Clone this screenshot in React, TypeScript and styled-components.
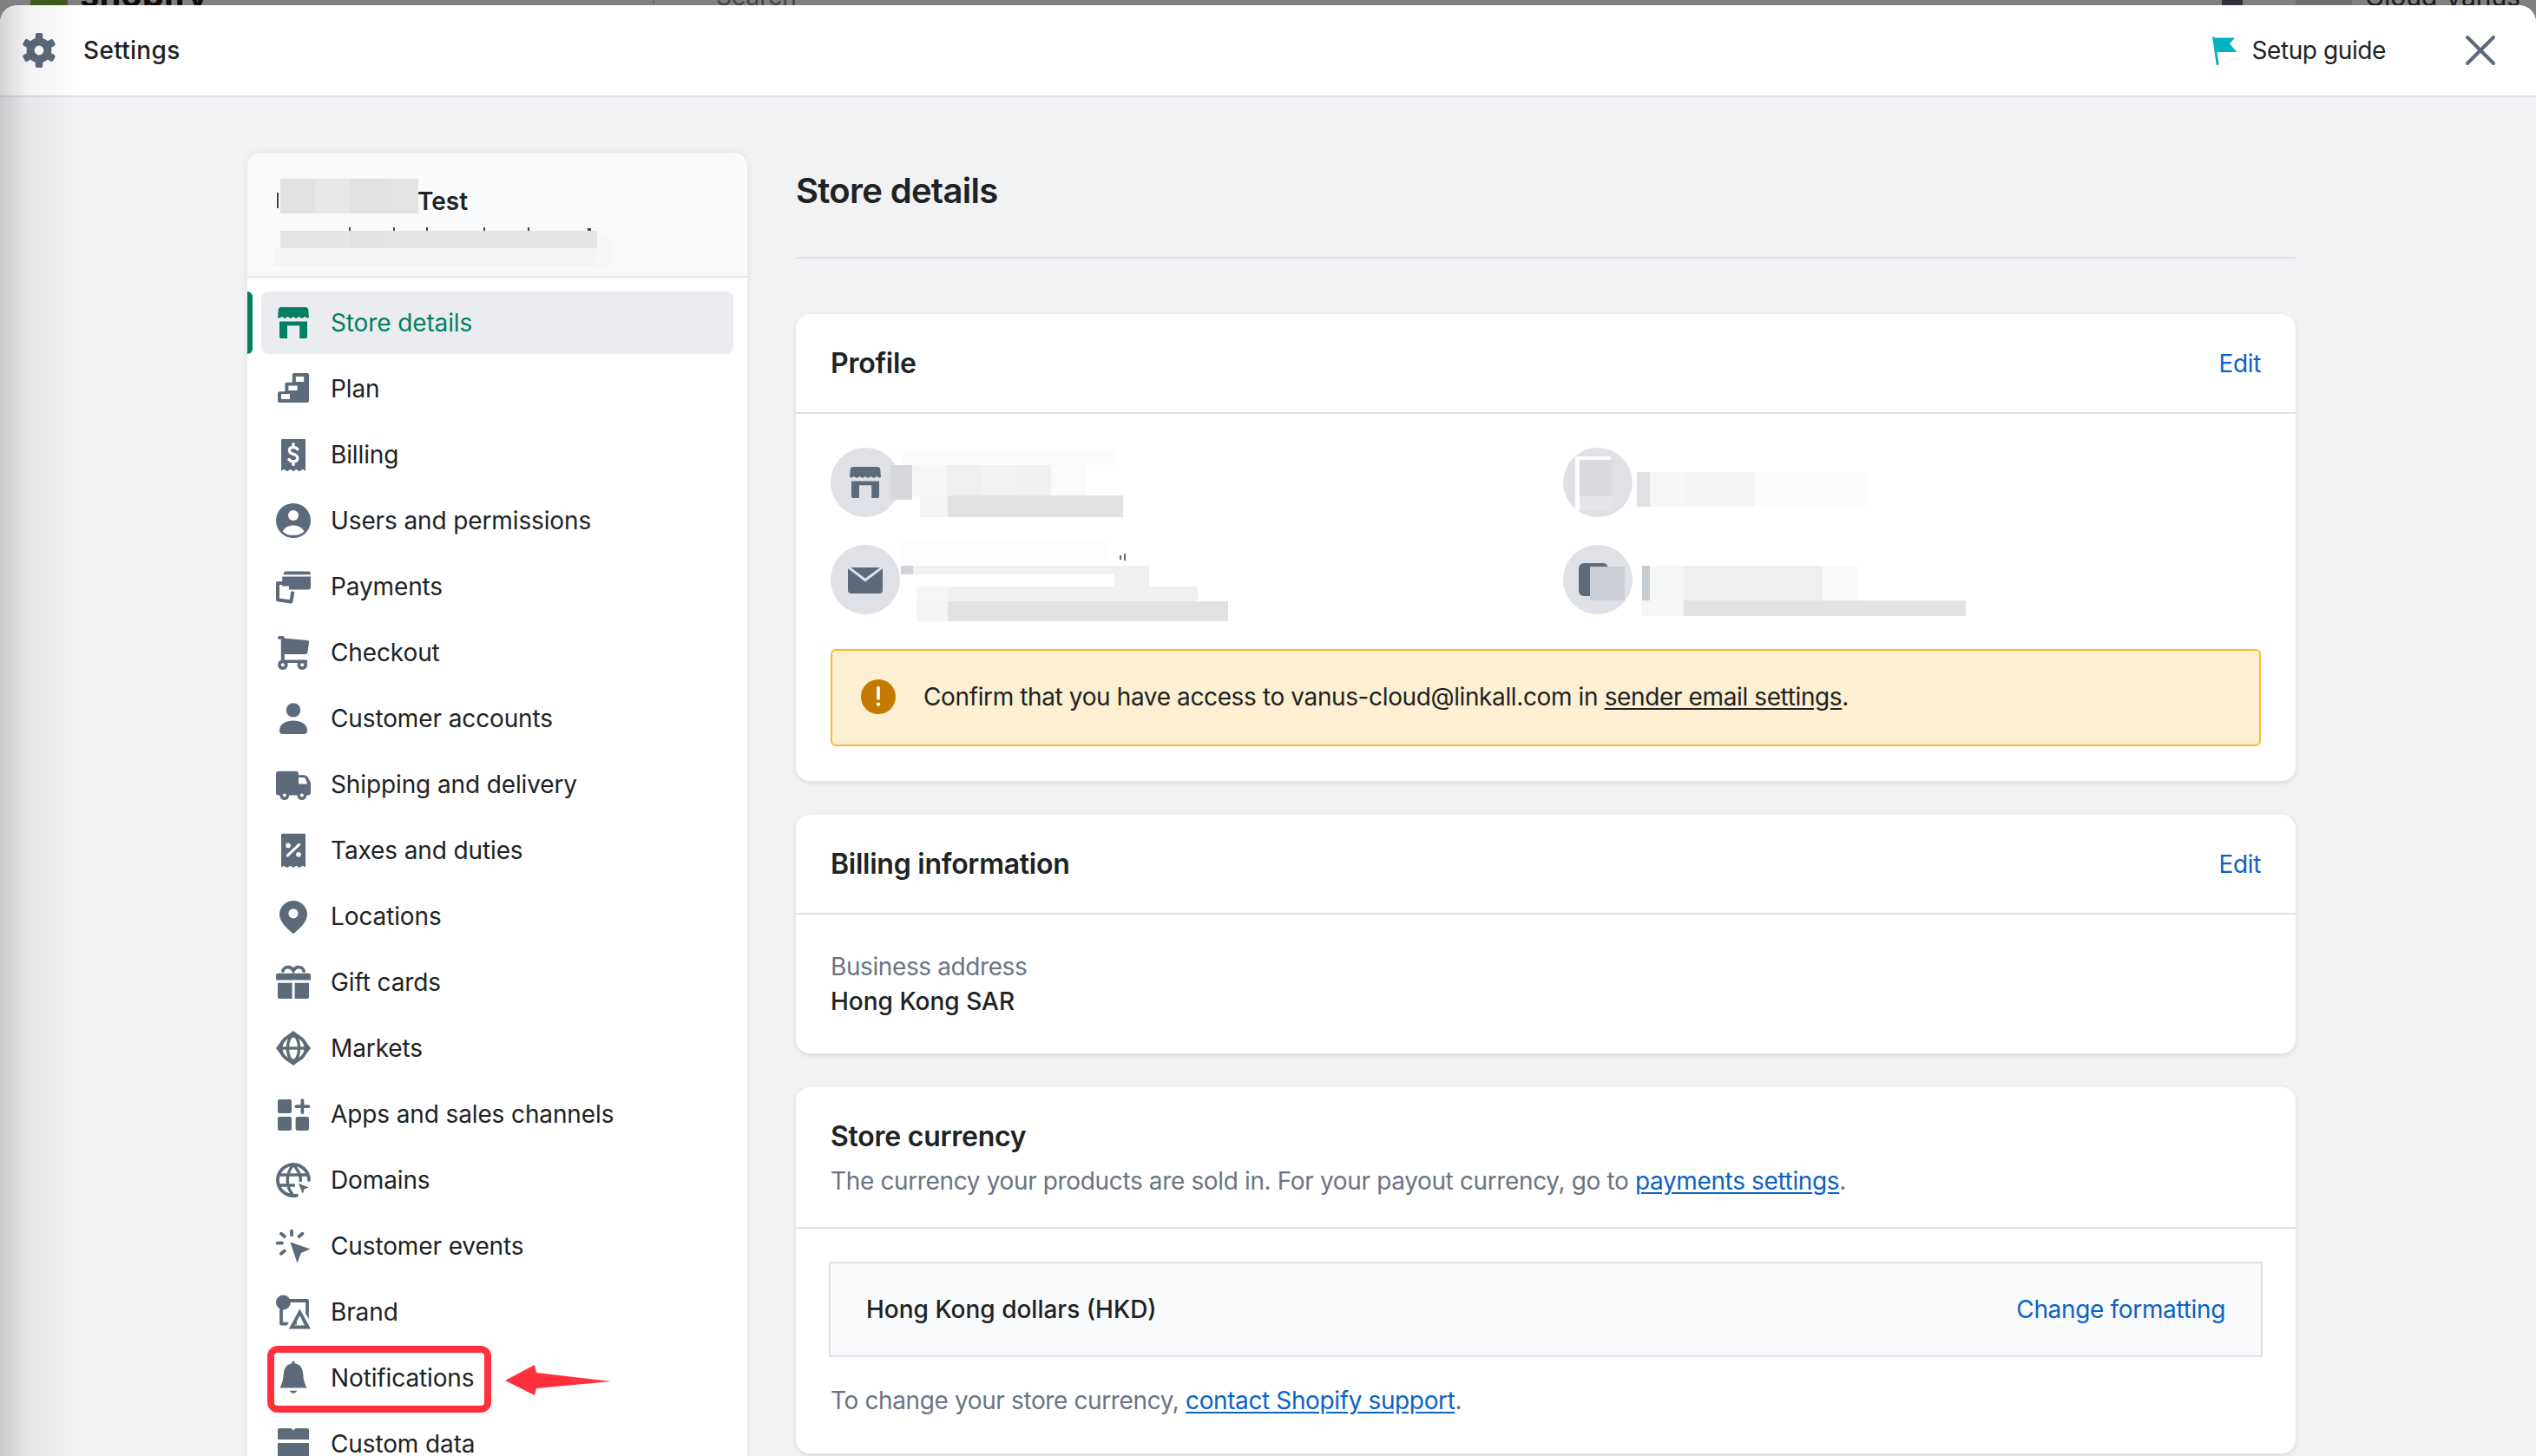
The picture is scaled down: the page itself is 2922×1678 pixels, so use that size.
import React from "react";
import styled, { createGlobalStyle } from "styled-components";

const GlobalStyle = createGlobalStyle`
  html, body {
    margin: 0;
    padding: 0;
    width: 2922px;
    height: 1678px;
    overflow: hidden;
    background: #808080;
    font-family: Inter, "Noto Sans", sans-serif;
    color: #202223;
  }
  * { box-sizing: border-box; }
`;

const W = "#fff";

const icons: Record<string, React.ReactNode> = {
  store: (
    <>
      <path d="M3 1H17Q18.4 1 18.6 2.4L19 7Q17.6 7.6 16.5 6.4Q15 8.4 13.2 6.4Q11.5 8.4 10 6.4Q8.5 8.4 6.8 6.4Q5 8.4 3.5 6.4Q2.4 7.6 1 7L1.4 2.4Q1.6 1 3 1Z" />
      <path d="M2 9.2H18V18a1 1 0 0 1-1 1H13.6V11.6H6.5V19H3a1 1 0 0 1-1-1Z" />
    </>
  ),
  plan: (
    <path
      fillRule="evenodd"
      d="M10.4 1H18a1 1 0 0 1 1 1V17a1 1 0 0 1-1 1H2a1 1 0 0 1-1-1V12.6a1 1 0 0 1 1-1H5.2V7.4a1 1 0 0 1 1-1H9.4V2a1 1 0 0 1 1-1ZM11.4 3V6H16.1V3ZM7.2 8.2V11H12.3V8.2ZM3 13V16H8V13Z"
    />
  ),
  billing: (
    <>
      <path d="M3.600 1H16.400a.6.6 0 0 1 .6.6V19.400L15.500 18.400 13.500 19.600 11.700 18.400 10 19.600 8.300 18.400 6.500 19.600 4.500 18.400 3 19.400V1.600a.6.6 0 0 1 .6-.6Z" />
      <path d="M12.400 6.800Q11.500 5.700 10 5.700 7.700 5.700 7.700 7.500 7.700 9 10 9.700 12.400 10.400 12.400 12 12.400 13.900 10 13.900 8.400 13.900 7.500 12.800" fill="none" stroke={W} strokeWidth="1.700" strokeLinecap="round" />
      <path d="M10 3.900V5.800M10 13.800V15.800" stroke={W} strokeWidth="1.700" strokeLinecap="round" />
    </>
  ),
  users: (
    <>
      <circle cx="10" cy="10" r="10" />
      <circle cx="10" cy="7" r="3" fill={W} />
      <path d="M3.800 16.200C5 13.800 7.300 12.700 10 12.700S15 13.800 16.200 16.200C14.600 17.800 12.500 18.400 10 18.400S5.400 17.800 3.800 16.200Z" fill={W} />
    </>
  ),
  payments: (
    <>
      <path d="M5.500 1.300H19a.9.9 0 0 1 .9.9V3.100H4.300Q4.400 1.300 5.500 1.300Z" />
      <path d="M3.600 4.200H20V10.300a1.500 1.500 0 0 1-1.500 1.500H7.500V9.800H3.600Z" />
      <path d="M4 8H1V17.600L8.700 18.700 9.700 12.800" fill="none" stroke="currentColor" strokeWidth="2" strokeLinejoin="round" />
    </>
  ),
  checkout: (
    <>
      <path d="M1.700.5H3.800a1 1 0 0 1 1 .8L4.900 1.700 18 3a1.100 1.100 0 0 1 1 1.300L18.200 10a1.200 1.200 0 0 1-1.200 1H4.900V14.200H18V16H2.900V2.400H1.700a1 1 0 0 1 0-1.900Z" />
      <circle cx="3.900" cy="17.100" r="2.900" />
      <circle cx="15.100" cy="17.100" r="2.900" />
      <circle cx="3.900" cy="17.100" r="1" fill={W} />
      <circle cx="15.100" cy="17.100" r="1" fill={W} />
    </>
  ),
  customer: (
    <>
      <circle cx="10" cy="5.200" r="4.100" />
      <path d="M2 17C2 13 6 11.300 10 11.300S18 13 18 17A2 2 0 0 1 16 19H4A2 2 0 0 1 2 17Z" />
    </>
  ),
  shipping: (
    <>
      <path d="M1.500 2.400H11.500A1.500 1.500 0 0 1 13 3.900V4.600H16C17.500 4.600 18 5.200 18.800 6.600L20 9V14.800A1.500 1.500 0 0 1 18.500 16.300H1.500A1.500 1.500 0 0 1 0 14.800V3.900A1.500 1.500 0 0 1 1.500 2.400Z" />
      <path d="M13 6H15.800Q16.700 6 17.200 7L18 9.700H13Z" fill={W} />
      <circle cx="4.900" cy="16.300" r="2.700" />
      <circle cx="14.900" cy="16.300" r="2.700" />
      <circle cx="4.900" cy="16.300" r="1" fill={W} />
      <circle cx="14.900" cy="16.300" r="1" fill={W} />
    </>
  ),
  taxes: (
    <>
      <path d="M3.600.4H16.400a.6.6 0 0 1 .6.6V19.800L15.500 18.900 13.500 20 11.700 18.900 10 20 8.300 18.900 6.500 20 4.500 18.900 3 19.800V1a.6.6 0 0 1 .6-.6Z" />
      <path d="M6.700 12.900L13.300 6.700" stroke={W} strokeWidth="1.600" strokeLinecap="round" />
      <circle cx="7" cy="7.200" r="1.400" fill={W} />
      <circle cx="13" cy="12.400" r="1.400" fill={W} />
    </>
  ),
  locations: (
    <>
      <path d="M10 1A8 8 0 0 1 18 9C18 13.500 13 17.500 10.600 19.700A1 1 0 0 1 9.400 19.700C7 17.500 2 13.500 2 9A8 8 0 0 1 10 1Z" />
      <circle cx="10" cy="8.400" r="2.800" fill={W} />
    </>
  ),
  gift: (
    <>
      <path d="M4 4.300C3.600 1 8.500.2 10 3.300 11.500.2 16.400 1 16 4.300" fill="none" stroke="currentColor" strokeWidth="1.800" />
      <path d="M1 4.900H19a1 1 0 0 1 1 1V8.800H0V5.900a1 1 0 0 1 1-1Z" />
      <path d="M1 10.400H9.300V19.500H2a1 1 0 0 1-1-1ZM10.800 10.400H19V18.500a1 1 0 0 1-1 1H10.800Z" />
    </>
  ),
  markets: (
    <>
      <circle cx="10" cy="10" r="7.200" fill="none" stroke="currentColor" strokeWidth="1.900" />
      <ellipse cx="10" cy="10" rx="3.300" ry="7.200" fill="none" stroke="currentColor" strokeWidth="1.700" />
      <path d="M3 10H17" stroke="currentColor" strokeWidth="1.700" />
      <path d="M10 0L14 3H6ZM10 20L14 17H6ZM0 10L3 6V14ZM20 10L17 6V14Z" />
    </>
  ),
  apps: (
    <>
      <rect x="1" y="1.500" width="8" height="8" rx="1" />
      <rect x="1" y="11.500" width="8" height="8" rx="1" />
      <rect x="11.300" y="11.500" width="7.700" height="8" rx="1" />
      <path d="M15.200 2.100V9M11.700 5.600H18.700" stroke="currentColor" strokeWidth="1.900" strokeLinecap="round" />
    </>
  ),
  domains: (
    <>
      <path d="M12 18.800A9 9 0 1 1 19 10" fill="none" stroke="currentColor" strokeWidth="1.900" strokeLinecap="round" />
      <path d="M9.700 18.500C5.500 13.500 5.500 6.500 10 1 14.500 6.500 14.500 9 14 11" fill="none" stroke="currentColor" strokeWidth="1.700" />
      <path d="M1.800 7H18M1.800 13H11" stroke="currentColor" strokeWidth="1.700" />
      <path d="M12.200 11.300L20 14.200 16.600 15.500 15.500 19Z" stroke={W} strokeWidth=".8" />
    </>
  ),
  events: (
    <>
      <path d="M9 1.300V3.700M3 2.900L4.900 4.500M15.200 2.900L13.300 4.500M.8 8.300H3.500M3 14.400L4.900 12.800" stroke="currentColor" strokeWidth="1.900" strokeLinecap="round" />
      <path d="M8.200 7.800L19.800 11.700 14.500 14 12.200 19.700Z" />
    </>
  ),
  brand: (
    <>
      <path d="M5 3.500H18V15M12 16.800H3V7" fill="none" stroke="currentColor" strokeWidth="1.900" strokeLinejoin="round" />
      <path d="M13.500 8L20 18.700H7.500Z" fill="none" stroke={W} strokeWidth="3" />
      <path fillRule="evenodd" d="M13.700 8.200L20 19.800H7.400ZM13.700 12L10.800 17.800H16.500Z" />
      <circle cx="4.200" cy="4.500" r="4.200" />
    </>
  ),
  notifications: (
    <>
      <path d="M9.200 1.600V1a.8.8 0 0 1 1.600 0V1.600C14.500 2.200 15.500 5 15.700 8.500 15.900 12 17 14 17.700 15.700H2.300C3 14 4.100 12 4.300 8.500 4.500 5 5.500 2.200 9.200 1.600Z" />
      <path d="M8 17.400H12Q11.500 18.800 10 18.800T8 17.400Z" />
    </>
  ),
  data: (
    <>
      <path d="M2 1H8Q9.500 1 10 2.600 10.500 1 12 1H18a1 1 0 0 1 1 1V7.500H1V2a1 1 0 0 1 1-1Z" />
      <path d="M1 9.500H19V19H1Z" />
    </>
  ),
  email: (
    <path d="M0 3.600L10 11.200 20 3.600V16a2 2 0 0 1-2 2H2a2 2 0 0 1-2-2ZM1.500 3H18.500L10 9.200Z" />
  ),
};

const navItems = [
  ["store", "Store details"],
  ["plan", "Plan"],
  ["billing", "Billing"],
  ["users", "Users and permissions"],
  ["payments", "Payments"],
  ["checkout", "Checkout"],
  ["customer", "Customer accounts"],
  ["shipping", "Shipping and delivery"],
  ["taxes", "Taxes and duties"],
  ["locations", "Locations"],
  ["gift", "Gift cards"],
  ["markets", "Markets"],
  ["apps", "Apps and sales channels"],
  ["domains", "Domains"],
  ["events", "Customer events"],
  ["brand", "Brand"],
  ["notifications", "Notifications"],
  ["data", "Custom data"],
];

const Icon = ({ name, className }: { name: string; className?: string }) => (
  <svg className={className} viewBox="0 0 20 20" fill="currentColor">
    {icons[name]}
  </svg>
);

const Page = styled.div`
  position: relative;
  width: 2922px;
  height: 1678px;
  overflow: hidden;
  background: #808080;
`;

const TopStrip = styled.div`
  display: flex;
  height: 6px;
  overflow: hidden;
  padding-left: 35px;
`;

const StripLogo = styled.div`
  width: 43px;
  height: 6px;
  background: #3d5a1a;
  margin-right: 14px;
`;

const StripBrand = styled.div`
  font-size: 40px;
  line-height: 40px;
  font-weight: 700;
  color: #0c0c0c;
  margin-top: -26px;
  width: 660px;
`;

const StripSearch = styled.div`
  font-size: 28px;
  line-height: 30px;
  color: #444;
  margin-top: -19px;
  padding-left: 71px;
  border-left: 2px solid #6e6e6e;
  width: 1808px;
`;

const StripAvatar = styled.div`
  width: 24px;
  height: 6px;
  background: #2f3238;
  margin-right: 61px;
`;

const StripShade = styled.div`
  width: 65px;
  height: 6px;
  background: #6f6f6f;
  margin-right: 15px;
`;

const StripUser = styled.div`
  font-size: 30px;
  line-height: 30px;
  color: #1a1a1a;
  margin-top: -19px;
  white-space: nowrap;
`;

const Modal = styled.div`
  height: 1672px;
  background: #f1f2f4;
  border-radius: 20px 20px 0 0;
  overflow: hidden;
`;

const Header = styled.header`
  display: flex;
  align-items: center;
  height: 106px;
  padding: 0 46px 0 25px;
  background: #fff;
  border-bottom: 2px solid #dfe1e6;
`;

const Gear = styled.svg`
  width: 40px;
  height: 40px;
  color: #5d6a7a;
  margin-right: 31px;
`;

const HeaderTitle = styled.div`
  flex: 1;
  font-size: 28px;
  font-weight: 500;
  letter-spacing: 0.3px;
`;

const SetupGuide = styled.div`
  display: flex;
  align-items: center;
  gap: 16px;
  font-size: 28px;
  letter-spacing: -0.4px;
  margin-right: 91px;
`;

const Flag = styled.svg`
  width: 29px;
  height: 33px;
  color: #00b3c4;
`;

const CloseIcon = styled.svg`
  width: 36px;
  height: 36px;
`;

const Content = styled.div`
  display: flex;
  align-items: flex-start;
  gap: 56px;
  padding: 64px 0 0 285px;
`;

const Sidebar = styled.aside`
  width: 576px;
  flex-shrink: 0;
  background: #fff;
  border-radius: 16px 16px 0 0;
  box-shadow: 0 0 10px rgba(23, 24, 24, 0.08);
`;

const SidebarHead = styled.div`
  position: relative;
  height: 144px;
  background: #f9fafb;
  border-bottom: 2px solid #e2e4e8;
  border-radius: 16px 16px 0 0;
  padding-top: 38px;
`;

const StoreName = styled.div`
  font-size: 28px;
  line-height: 36px;
  font-weight: 600;
  padding-left: 196px;
`;

const Nav = styled.nav`
  display: flex;
  flex-direction: column;
  gap: 4px;
  padding: 16px;
`;

const NavRow = styled.div<{ $active?: boolean }>`
  position: relative;
  display: flex;
  align-items: center;
  gap: 23px;
  height: 72px;
  flex-shrink: 0;
  padding-left: 17px;
  border-radius: 8px;
  font-size: 28px;
  letter-spacing: -0.12px;
  background: ${(p) => (p.$active ? "#ebecf0" : "transparent")};
  color: ${(p) => (p.$active ? "#008060" : "#202223")};
`;

const ActiveBar = styled.div`
  position: absolute;
  left: -16px;
  top: 0;
  width: 6px;
  height: 72px;
  background: #008060;
  border-radius: 0 6px 6px 0;
`;

const NavIcon = styled(Icon)<{ $active?: boolean }>`
  width: 40px;
  height: 40px;
  flex-shrink: 0;
  color: ${(p) => (p.$active ? "#008060" : "#5d6a7a")};
`;

const Highlight = styled.div`
  position: absolute;
  left: 7px;
  top: -1px;
  width: 258px;
  height: 77px;
  border: 8px solid #ff303b;
  border-radius: 12px;
`;

const Arrow = styled.svg`
  position: absolute;
  left: 281px;
  top: 21px;
  width: 122px;
  height: 36px;
`;

const Main = styled.main`
  width: 1728px;
  flex-shrink: 0;
`;

const PageTitle = styled.h1`
  margin: 0;
  font-size: 40px;
  line-height: 48px;
  font-weight: 600;
  letter-spacing: -0.7px;
  padding: 20px 0 52px;
  border-bottom: 2px solid #dfe1e6;
`;

const Cards = styled.div`
  display: flex;
  flex-direction: column;
  gap: 39px;
  margin-top: 64px;
`;

const Card = styled.section`
  background: #fff;
  border-radius: 16px;
  box-shadow: 0 2px 6px rgba(23, 24, 24, 0.1);
`;

const CardHead = styled.div`
  display: flex;
  align-items: center;
  justify-content: space-between;
  height: 115px;
  padding: 0 40px;
  border-bottom: 2px solid #dfe1e6;
`;

const CardTitle = styled.h2`
  margin: 0;
  font-size: 32px;
  line-height: 40px;
  font-weight: 600;
  letter-spacing: -0.25px;
`;

const Action = styled.span`
  font-size: 28px;
  letter-spacing: -0.33px;
  color: #0b62c4;
`;

const ProfileBody = styled.div`
  padding: 39px 40px 40px;
`;

const ContactGrid = styled.div`
  display: grid;
  grid-template-columns: 1fr 1fr;
  gap: 32px 40px;
`;

const ContactCell = styled.div`
  position: relative;
  height: 80px;
`;

const Avatar = styled.div`
  display: flex;
  align-items: center;
  justify-content: center;
  width: 80px;
  height: 80px;
  border-radius: 50%;
  background: #dfe1e6;
  color: #5d6a7a;
`;

const AvatarIcon = styled(Icon)`
  width: 40px;
  height: 40px;
`;

const PhoneGlyph = styled.div`
  width: 34px;
  height: 38px;
  margin-left: -10px;
  background: #5d6a7a;
  border-radius: 6px 6px 0 6px;
`;

const Tile = styled.div<{ $x: number; $y: number; $w: number; $h: number; $c: string }>`
  position: absolute;
  left: ${(p) => p.$x}px;
  top: ${(p) => p.$y}px;
  width: ${(p) => p.$w}px;
  height: ${(p) => p.$h}px;
  background: ${(p) => p.$c};
`;

type T = [number, number, number, number, string];

const Mosaic = ({ tiles }: { tiles: T[] }) => (
  <>
    {tiles.map(([x, y, w, h, c], i) => (
      <Tile key={i} $x={x} $y={y} $w={w} $h={h} $c={c} />
    ))}
  </>
);

const nameBlur: T[] = [
  [34, 46, 2, 18, "#444"],
  [38, 30, 40, 40, "#e2e2e3"],
  [78, 30, 40, 40, "#e7e7e8"],
  [118, 30, 40, 40, "#e1e1e2"],
  [158, 30, 39, 40, "#e3e3e4"],
  [117, 86, 2, 4, "#444"],
  [168, 86, 2, 4, "#444"],
  [206, 86, 2, 4, "#444"],
  [272, 86, 2, 4, "#444"],
  [323, 86, 2, 4, "#444"],
  [392, 87, 4, 3, "#444"],
  [38, 90, 80, 20, "#e4e4e5"],
  [118, 90, 40, 20, "#e1e1e2"],
  [158, 90, 245, 20, "#e6e6e7"],
  [30, 110, 373, 20, "#f4f4f5"],
  [403, 96, 16, 36, "#f7f7f8"],
];

const cellBlur: T[][] = [
  [
    [69, 20, 25, 40, "#d6d8dc"],
    [83, 4, 245, 16, "#fbfbfb"],
    [94, 20, 40, 36, "#f6f6f6"],
    [134, 20, 40, 36, "#eeeff0"],
    [174, 20, 40, 36, "#f1f2f3"],
    [214, 20, 40, 36, "#eff0f1"],
    [254, 20, 40, 36, "#fbfbfb"],
    [103, 55, 32, 25, "#f4f4f4"],
    [135, 55, 202, 25, "#e2e2e2"],
  ],
  [
    [81, -6, 240, 30, "#fdfdfd"],
    [81, 24, 14, 10, "#cfd3d8"],
    [95, 24, 272, 10, "#eff0f1"],
    [327, 34, 40, 14, "#eeeff1"],
    [333, 12, 2, 5, "#5d6a7a"],
    [338, 10, 2, 8, "#5d6a7a"],
    [99, 48, 36, 17, "#f6f6f6"],
    [135, 48, 288, 17, "#eff0f0"],
    [99, 65, 36, 23, "#f4f4f4"],
    [135, 65, 323, 23, "#e2e2e2"],
  ],
  [
    [14, 10, 41, 62, "#fff"],
    [19, 14, 37, 42, "#d8dade"],
    [19, 56, 37, 16, "#e5e6e8"],
    [85, 28, 15, 40, "#dfe1e4"],
    [100, 28, 40, 40, "#f6f6f6"],
    [140, 28, 80, 40, "#f3f4f4"],
    [220, 28, 130, 40, "#fcfcfc"],
  ],
  [
    [31, 25, 40, 39, "#caced4"],
    [91, 24, 9, 40, "#c8cdd3"],
    [100, 24, 39, 40, "#f5f6f6"],
    [139, 24, 160, 40, "#eeeff0"],
    [299, 24, 40, 40, "#fafafa"],
    [91, 64, 48, 18, "#f6f6f6"],
    [139, 64, 325, 18, "#e2e2e2"],
  ],
];

const Banner = styled.div`
  display: flex;
  align-items: center;
  gap: 32px;
  height: 112px;
  margin-top: 40px;
  padding: 0 0 3px 33px;
  background: #fdefd1;
  border: 2px solid #ffb92e;
  border-radius: 6px;
  font-size: 28px;
  letter-spacing: -0.38px;
`;

const AlertIcon = styled.svg`
  width: 40px;
  height: 40px;
  flex-shrink: 0;
`;

const PlainLink = styled.span`
  text-decoration: underline;
  text-underline-offset: 3px;
`;

const BillingBody = styled.div`
  padding: 40px;
  font-size: 28px;
  line-height: 40px;
`;

const Muted = styled.div`
  color: #6b7484;
  letter-spacing: -0.4px;
`;

const Strong = styled.div`
  font-weight: 500;
`;

const CurrencyHead = styled.div`
  padding: 37px 40px 33px;
  border-bottom: 2px solid #dfe1e6;
`;

const CurrencyNote = styled.div`
  margin-top: 11px;
  font-size: 28px;
  line-height: 40px;
  letter-spacing: -0.36px;
  color: #6b7484;
`;

const BlueLink = styled.span`
  color: #0b62c4;
  text-decoration: underline;
  text-underline-offset: 3px;
`;

const CurrencyBody = styled.div`
  padding: 38px 38px 41px;
`;

const CurrencyBox = styled.div`
  display: flex;
  align-items: center;
  justify-content: space-between;
  height: 110px;
  padding: 0 41px;
  background: #f9fafb;
  border: 2px solid #dfe1e6;
  font-size: 28px;
`;

const Footnote = styled.div`
  margin-top: 30px;
  padding-left: 2px;
  font-size: 28px;
  line-height: 40px;
  letter-spacing: -0.38px;
  color: #6b7484;
`;

const EdgeShade = styled.div`
  position: absolute;
  left: 0;
  top: 6px;
  bottom: 0;
  width: 90px;
  background: linear-gradient(90deg, rgba(0, 0, 0, 0.17), rgba(0, 0, 0, 0.05) 35%, transparent);
  border-radius: 20px 0 0 0;
  pointer-events: none;
`;

const App = () => {
  return (
    <Page>
      <GlobalStyle />
      <TopStrip>
        <StripLogo />
        <StripBrand>shopify</StripBrand>
        <StripSearch>Search</StripSearch>
        <StripAvatar />
        <StripShade />
        <StripUser>Cloud Vanus</StripUser>
      </TopStrip>
      <Modal>
        <Header>
          <Gear viewBox="0 0 20 20" fill="currentColor">
            {[0, 60, 120, 180, 240, 300].map((a) => (
              <rect key={a} x="7.900" y="0" width="4.200" height="5" rx="1" transform={`rotate(${a} 10 10)`} />
            ))}
            <path fillRule="evenodd" d="M10 2.800A7.200 7.200 0 1 1 10 17.200 7.200 7.200 0 0 1 10 2.800ZM10 7.300A2.700 2.700 0 1 0 10 12.700 2.700 2.700 0 0 0 10 7.300Z" />
          </Gear>
          <HeaderTitle>Settings</HeaderTitle>
          <SetupGuide>
            <Flag viewBox="0 0 29 33" fill="currentColor">
              <path d="M.2 1Q.2 0 1 0L3 1.500H26L20 8.500 28.500 18H5.500L7.500 31A1.500 1.500 0 0 1 4.600 32Z" />
            </Flag>
            Setup guide
          </SetupGuide>
          <CloseIcon viewBox="0 0 36 36" fill="none" stroke="#5d6a7a" strokeWidth="4" strokeLinecap="round">
            <path d="M3 3L33 33M33 3L3 33" />
          </CloseIcon>
        </Header>
        <Content>
          <Sidebar>
            <SidebarHead>
              <Mosaic tiles={nameBlur} />
              <StoreName>Test</StoreName>
            </SidebarHead>
            <Nav>
              {navItems.map(([icon, label], i) => (
                <NavRow key={label} $active={i === 0}>
                  {i === 0 && <ActiveBar />}
                  <NavIcon name={icon} $active={i === 0} />
                  {label}
                  {label === "Notifications" && (
                    <>
                      <Highlight />
                      <Arrow viewBox="0 0 122 36" fill="#ff303b">
                        <path d="M0 18L34 0 36 9 122 19 36 27 34 35Z" />
                      </Arrow>
                    </>
                  )}
                </NavRow>
              ))}
            </Nav>
          </Sidebar>
          <Main>
            <PageTitle>Store details</PageTitle>
            <Cards>
              <Card>
                <CardHead>
                  <CardTitle>Profile</CardTitle>
                  <Action>Edit</Action>
                </CardHead>
                <ProfileBody>
                  <ContactGrid>
                    <ContactCell>
                      <Avatar>
                        <AvatarIcon name="store" />
                      </Avatar>
                      <Mosaic tiles={cellBlur[0]} />
                    </ContactCell>
                    <ContactCell>
                      <Avatar />
                      <Mosaic tiles={cellBlur[2]} />
                    </ContactCell>
                    <ContactCell>
                      <Avatar>
                        <AvatarIcon name="email" />
                      </Avatar>
                      <Mosaic tiles={cellBlur[1]} />
                    </ContactCell>
                    <ContactCell>
                      <Avatar>
                        <PhoneGlyph />
                      </Avatar>
                      <Mosaic tiles={cellBlur[3]} />
                    </ContactCell>
                  </ContactGrid>
                  <Banner>
                    <AlertIcon viewBox="0 0 20 20">
                      <circle cx="10" cy="10" r="10" fill="#c47a00" />
                      <path d="M10 4.800V11" stroke="#fff" strokeWidth="1.800" strokeLinecap="round" />
                      <circle cx="10" cy="14.300" r="1.100" fill="#fff" />
                    </AlertIcon>
                    <span>
                      Confirm that you have access to vanus-cloud@linkall.com in{" "}
                      <PlainLink>sender email settings</PlainLink>.
                    </span>
                  </Banner>
                </ProfileBody>
              </Card>
              <Card>
                <CardHead>
                  <CardTitle>Billing information</CardTitle>
                  <Action>Edit</Action>
                </CardHead>
                <BillingBody>
                  <Muted>Business address</Muted>
                  <Strong>Hong Kong SAR</Strong>
                </BillingBody>
              </Card>
              <Card>
                <CurrencyHead>
                  <CardTitle>Store currency</CardTitle>
                  <CurrencyNote>
                    The currency your products are sold in. For your payout currency, go to{" "}
                    <BlueLink>payments settings</BlueLink>.
                  </CurrencyNote>
                </CurrencyHead>
                <CurrencyBody>
                  <CurrencyBox>
                    <Strong>Hong Kong dollars (HKD)</Strong>
                    <Action>Change formatting</Action>
                  </CurrencyBox>
                  <Footnote>
                    To change your store currency, <BlueLink>contact Shopify support</BlueLink>.
                  </Footnote>
                </CurrencyBody>
              </Card>
            </Cards>
          </Main>
        </Content>
      </Modal>
      <EdgeShade />
    </Page>
  );
};

export default App;
